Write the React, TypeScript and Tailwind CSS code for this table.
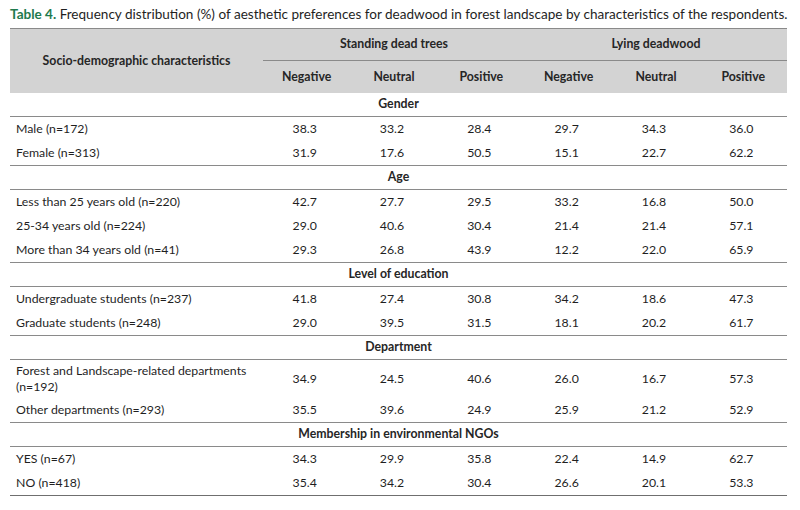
import React from "react";

type Row = { label: string; vals: string[]; tall?: boolean };
type Group = { title: string; rows: Row[] };

const groups: Group[] = [
  {
    title: "Gender",
    rows: [
      { label: "Male (n=172)", vals: ["38.3", "33.2", "28.4", "29.7", "34.3", "36.0"] },
      { label: "Female (n=313)", vals: ["31.9", "17.6", "50.5", "15.1", "22.7", "62.2"] },
    ],
  },
  {
    title: "Age",
    rows: [
      { label: "Less than 25 years old (n=220)", vals: ["42.7", "27.7", "29.5", "33.2", "16.8", "50.0"] },
      { label: "25-34 years old (n=224)", vals: ["29.0", "40.6", "30.4", "21.4", "21.4", "57.1"] },
      { label: "More than 34 years old (n=41)", vals: ["29.3", "26.8", "43.9", "12.2", "22.0", "65.9"] },
    ],
  },
  {
    title: "Level of education",
    rows: [
      { label: "Undergraduate students (n=237)", vals: ["41.8", "27.4", "30.8", "34.2", "18.6", "47.3"] },
      { label: "Graduate students (n=248)", vals: ["29.0", "39.5", "31.5", "18.1", "20.2", "61.7"] },
    ],
  },
  {
    title: "Department",
    rows: [
      { label: "Forest and Landscape-related departments (n=192)", vals: ["34.9", "24.5", "40.6", "26.0", "16.7", "57.3"], tall: true },
      { label: "Other departments (n=293)", vals: ["35.5", "39.6", "24.9", "25.9", "21.2", "52.9"] },
    ],
  },
  {
    title: "Membership in environmental NGOs",
    rows: [
      { label: "YES (n=67)", vals: ["34.3", "29.9", "35.8", "22.4", "14.9", "62.7"] },
      { label: "NO (n=418)", vals: ["35.4", "34.2", "30.4", "26.6", "20.1", "53.3"] },
    ],
  },
];

export default function App() {
  return (
    <div
      className="w-[800px] h-[510px] bg-white text-[#1f1f1f] overflow-hidden"
      style={{ fontFamily: "Lato, 'Open Sans', sans-serif" }}
    >
      <div className="pl-[10px] pt-[5px] h-[28px] text-[13.55px] leading-[18px] whitespace-nowrap">
        <span className="font-bold text-[#1e7a4e]">Table 4.</span>{" "}
        <span className="text-[#1f1f1f]">
          Frequency distribution (%) of aesthetic preferences for deadwood in forest landscape by characteristics of the respondents.
        </span>
      </div>
      <div className="ml-[10px] w-[777px] text-[12.3px]">
        {/* Header */}
        <div className="flex bg-[#d3d3d3] border-t border-[#8a8a8a] h-[65px] font-bold text-[#262626]">
          <div className="w-[253px] flex items-center justify-center">Socio-demographic characteristics</div>
          <div className="flex-1 flex flex-col">
            <div className="flex h-[32px] border-b border-[#8a8a8a]">
              <div className="flex-1 flex items-center justify-center">Standing dead trees</div>
              <div className="flex-1 flex items-center justify-center">Lying deadwood</div>
            </div>
            <div className="flex flex-1">
              {["Negative", "Neutral", "Positive", "Negative", "Neutral", "Positive"].map((h, i) => (
                <div key={i} className="flex-1 flex items-center justify-center">
                  {h}
                </div>
              ))}
            </div>
          </div>
        </div>
        {groups.map((g, gi) => (
          <div key={gi} className={gi > 0 ? "border-t border-[#8a8a8a]" : ""}>
            <div className="h-[24px] flex items-center justify-center font-bold border-b border-[#8a8a8a] text-[#262626]">
              {g.title}
            </div>
            {g.rows.map((r, ri) => (
              <div key={ri} className={`flex items-center ${r.tall ? "h-[38px]" : "h-[24px]"}`}>
                <div className="w-[253px] pl-[6px] pr-[10px] leading-[16px]">{r.label}</div>
                {r.vals.map((v, vi) => (
                  <div key={vi} className="flex-1 text-center pr-[4px]">
                    {v}
                  </div>
                ))}
              </div>
            ))}
          </div>
        ))}
        <div className="border-t border-[#6f6f6f]" />
      </div>
    </div>
  );
}
